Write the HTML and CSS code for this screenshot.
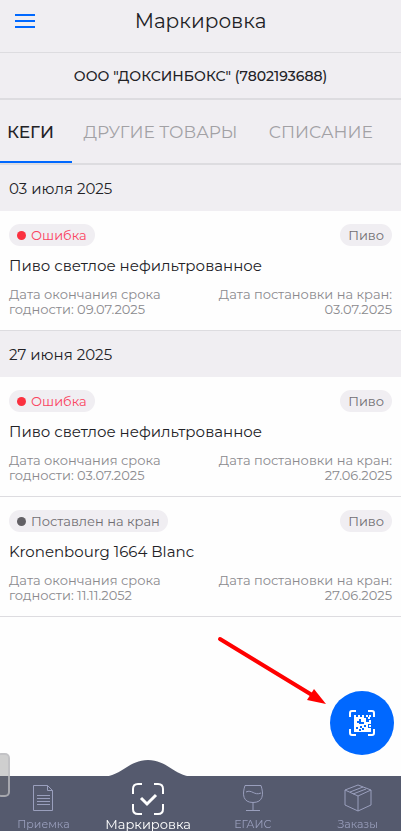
FILE: index.html
```html
<!DOCTYPE html>
<html lang="ru">
<head>
<meta charset="utf-8">
<meta name="viewport" content="width=device-width, initial-scale=1">
<title>Маркировка</title>
<link rel="stylesheet" href="styles.css">
</head>
<body>
<header class="topbar">
  <button class="menu" type="button" aria-label="Меню">
    <svg width="20" height="14" viewBox="0 0 20 14"><path d="M0 1h20M0 7h20M0 13h20" stroke="#0068ff" stroke-width="2"/></svg>
  </button>
  <h1 class="title">Маркировка</h1>
</header>
<div class="company">ООО "ДОКСИНБОКС" (7802193688)</div>
<nav class="tabs">
  <a class="tab tab-active" href="#kegs">КЕГИ</a>
  <a class="tab" href="#goods">ДРУГИЕ ТОВАРЫ</a>
  <a class="tab" href="#writeoff">СПИСАНИЕ</a>
</nav>
<main class="list" id="kegs">
  <h2 class="day">03 июля 2025</h2>
  <article class="card">
    <div class="row">
      <span class="badge badge-error"><i class="dot"></i>Ошибка</span>
      <span class="badge badge-kind">Пиво</span>
    </div>
    <h3 class="name">Пиво светлое нефильтрованное</h3>
    <div class="row dates">
      <p>Дата окончания срока<br>годности: 09.07.2025</p>
      <p class="end">Дата постановки на кран:<br>03.07.2025</p>
    </div>
  </article>
  <h2 class="day">27 июня 2025</h2>
  <article class="card">
    <div class="row">
      <span class="badge badge-error"><i class="dot"></i>Ошибка</span>
      <span class="badge badge-kind">Пиво</span>
    </div>
    <h3 class="name">Пиво светлое нефильтрованное</h3>
    <div class="row dates">
      <p>Дата окончания срока<br>годности: 03.07.2025</p>
      <p class="end">Дата постановки на кран:<br>27.06.2025</p>
    </div>
  </article>
  <article class="card">
    <div class="row">
      <span class="badge"><i class="dot"></i>Поставлен на кран</span>
      <span class="badge badge-kind">Пиво</span>
    </div>
    <h3 class="name">Kronenbourg 1664 Blanc</h3>
    <div class="row dates">
      <p>Дата окончания срока<br>годности: 11.11.2052</p>
      <p class="end">Дата постановки на кран:<br>27.06.2025</p>
    </div>
  </article>
</main>

<svg class="arrow" width="110" height="70" viewBox="0 0 110 70" aria-hidden="true">
  <path d="M4 4L96 60" stroke="#f00" stroke-width="4" stroke-linecap="round"/>
  <path d="M110 69L98 54L91 65Z" fill="#f00"/>
</svg>
<button class="scan" type="button" aria-label="Сканировать код">
  <svg width="26" height="26" viewBox="0 0 26 26">
    <path d="M1 7V3Q1 1 3 1H7M19 1H23Q25 1 25 3V7M25 19V23Q25 25 23 25H19M7 25H3Q1 25 1 23V19" fill="none" stroke="#fff" stroke-width="2"/>
    <path d="M5 5h2v2h2v-2h2v2h2v-2h2v3h2v4h5v2h-3v4h3v4H5z" fill="#fff"/>
    <path d="M17 5h2v2h-2zM20 5h2v2h-2zM19 7h2v2h-2zM20 10h2v2h-2zM20 15h2v2h-2z" fill="#fff"/>
    <path d="M8 11h2v2h-2zM10 9h2v5h-2zM12 12h3v2h-3zM7 17h2v2h-2zM11 16h2v2h-2zM13 18h2v2h-2zM15 15h2v2h-2zM10 19h2v2h-2z" fill="#0068ff"/>
  </svg>
</button>
<span class="handle" aria-hidden="true"></span>

<nav class="bottom">
  <svg class="hump" width="90" height="17" viewBox="0 0 90 17" aria-hidden="true"><path d="M0 17C20 15 26 0 45 0S70 15 90 17Z" fill="#555a6e"/></svg>
  <a class="item" href="#receive">
    <svg width="30" height="32" viewBox="0 0 30 32"><path d="M5.500 2.500h14l5 5v20h-19zM19.500 2.500v5h5M9 12.500h13M9 15.500h13M9 18.500h13M9 21.500h13" fill="none" stroke="currentColor"/></svg>
    <span>Приемка</span>
  </a>
  <a class="item item-active" href="#marking">
    <svg width="32" height="32" viewBox="0 0 32 32"><path d="M1 11V6Q1 1 6 1H10M22 1H26Q31 1 31 6V11M31 21V26Q31 31 26 31H22M10 31H6Q1 31 1 26V21" fill="none" stroke="currentColor" stroke-width="2"/><path d="M9 15l6 6 9-9" fill="none" stroke="currentColor" stroke-width="3"/></svg>
    <span>Маркировка</span>
  </a>
  <a class="item" href="#egais">
    <svg width="30" height="32" viewBox="0 0 30 32"><path d="M7 2.500h16c3 9 2 17-8 17S4 11.500 7 2.500zM15 19.500v8M8 27.500h14M8 9c6-3 8 4 15 1" fill="none" stroke="currentColor"/></svg>
    <span>ЕГАИС</span>
  </a>
  <a class="item" href="#orders">
    <svg width="30" height="32" viewBox="0 0 30 32"><path d="M15 2l13 5v15l-13 6-13-6V7zM2 7l13 6 13-6M15 13v15M7 9l13-5M10 11l13-5" fill="none" stroke="currentColor"/></svg>
    <span>Заказы</span>
  </a>
</nav>
</body>
</html>
```
FILE: styles.css
```css
* { box-sizing: border-box; }

body {
  margin: 0;
  min-height: 100vh;
  background: #fefefe;
  color: #222226;
  font-family: Montserrat, Inter, "Noto Sans", sans-serif;
  font-size: 15px;
  overflow-x: hidden;
}

h1, h2, h3, p { margin: 0; font-weight: 400; }
a { color: inherit; text-decoration: none; }
button { border: 0; padding: 0; cursor: pointer; }
svg { display: block; }

.topbar {
  display: grid;
  grid-template-columns: 50px 1fr 50px;
  align-items: center;
  height: 53px;
  padding-bottom: 10px;
  background: #f0eef2;
  border-bottom: 1px solid #dddce0;
}
.menu { display: flex; justify-content: center; background: none; }
.title { font-size: 20px; line-height: 24px; text-align: center; }

.company {
  padding: 14px 8px 13px;
  background: #f0eef2;
  border-bottom: 2px solid #dddce0;
  font-size: 14px;
  font-weight: 500;
  line-height: 18px;
  text-align: center;
}

.tabs {
  display: grid;
  grid-template-columns: 18% 44% 36%;
  background: #f0eef2;
  border-bottom: 2px solid #dddce0;
  color: #a2a1a5;
  font-size: 17px;
  line-height: 24px;
}
.tab { padding: 20px 0 17px; text-align: center; white-space: nowrap; }
.tab-active {
  padding-left: 7px;
  border-bottom: 2px solid #0068ff;
  color: #222226;
  font-weight: 500;
  text-align: left;
}

.day {
  padding: 14px 9px 12px;
  background: #f0eef2;
  font-size: 15px;
  line-height: 20px;
}

.card { padding: 13px 9px 13px; border-bottom: 1px solid #dddce0; }
.row { display: flex; justify-content: space-between; }
.badge {
  display: flex;
  align-items: center;
  gap: 5px;
  padding: 0 8px;
  border-radius: 11px;
  background: #f0eef2;
  color: #706e73;
  font-size: 13px;
  line-height: 22px;
}
.dot { width: 9px; height: 9px; border-radius: 50%; background: #626065; }
.badge-error { color: #fa4360; }
.badge-error .dot { background: #fb3140; }
.name { margin: 10px 0 11px; font-size: 15px; line-height: 20px; }
.dates { color: #8b8a8e; font-size: 13px; line-height: 15px; }
.end { text-align: right; }

.arrow { position: fixed; right: 75px; bottom: 126px; }
.scan {
  position: fixed;
  right: 7px;
  bottom: 76px;
  display: grid;
  place-items: center;
  width: 64px;
  height: 64px;
  border-radius: 50%;
  background: #0068ff;
}
.handle {
  position: fixed;
  z-index: 2;
  left: -4px;
  bottom: 34px;
  width: 14px;
  height: 44px;
  border: 2px solid rgba(190, 190, 194, .75);
  border-radius: 5px;
  background: rgba(120, 120, 120, .35);
}

.bottom {
  position: fixed;
  left: 0;
  right: 0;
  bottom: 0;
  display: grid;
  grid-template-columns: repeat(4, 1fr);
  height: 55px;
  margin: 0 -9px;
  background: #555a6e;
  color: #9a9fbd;
  font-size: 11px;
  line-height: 16px;
}
.hump { position: absolute; left: 37.5%; top: -16px; transform: translateX(-50%); }
.item {
  display: flex;
  flex-direction: column;
  align-items: center;
  gap: 1px;
  padding-top: 7px;
  white-space: nowrap;
}
.item-active { color: #fff; font-size: 13px; }
```
